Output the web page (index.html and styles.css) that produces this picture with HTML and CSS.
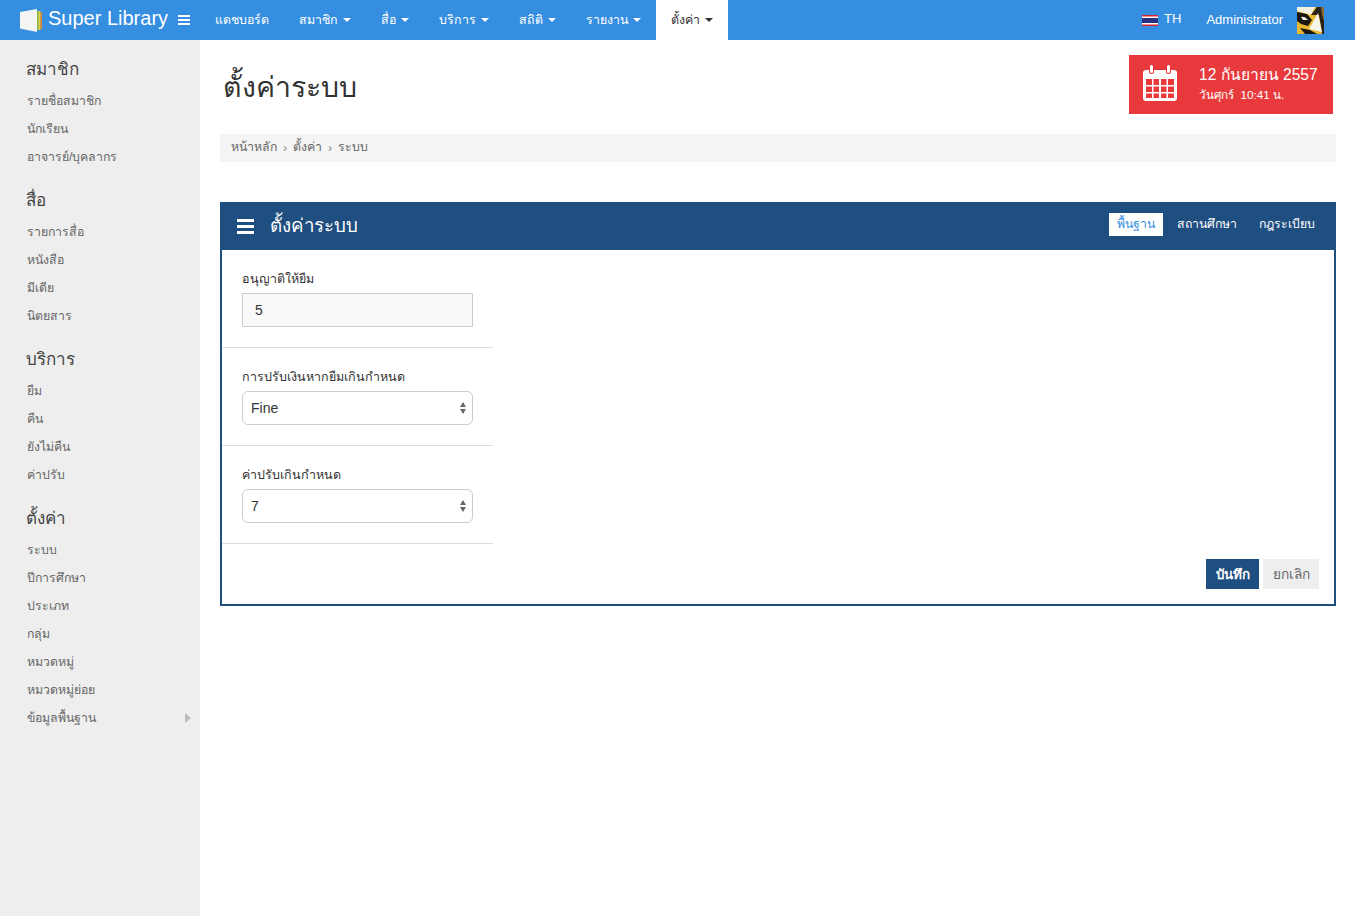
FILE: index.html
```html
<!doctype html>
<html lang="th">
<head>
	<meta charset="utf-8">
	<title>Super Library</title>
	<link rel="stylesheet" href="styles.css">
</head>
<body>
	<header class="navbar">
		<a class="brand" href="#">
			<svg class="brand-logo" width="22" height="23" viewBox="0 0 22 23">
				<rect x="17" y="2" width="1.700" height="19" fill="#8fbf45"/>
				<rect x="18.700" y="2" width="1.700" height="19" fill="#ecd03c"/>
				<rect x="20.400" y="3" width="1.600" height="17" fill="#e58a2c"/>
				<path d="M0 3 17 0V23L0 19.500Z" fill="#f4f4f2"/>
			</svg>
			<span class="brand-name">Super Library</span>
		</a>
		<span class="nav-toggle"><i></i><i></i><i></i></span>
		<nav class="nav-links">
			<a href="#">แดชบอร์ด</a>
			<a href="#">สมาชิก <b class="caret"></b></a>
			<a href="#">สื่อ <b class="caret"></b></a>
			<a href="#">บริการ <b class="caret"></b></a>
			<a href="#">สถิติ <b class="caret"></b></a>
			<a href="#">รายงาน <b class="caret"></b></a>
			<a href="#" class="active">ตั้งค่า <b class="caret"></b></a>
		</nav>
		<div class="nav-right">
			<a class="lang" href="#">
				<svg width="16" height="11" viewBox="0 0 16 11">
					<rect width="16" height="11" fill="#fff"/>
					<rect y="0" width="16" height="1.500" fill="#d8202c"/>
					<rect y="9.500" width="16" height="1.500" fill="#d8202c"/>
					<rect y="3" width="16" height="5" fill="#2a2f7f"/>
				</svg>
				<span>TH</span>
			</a>
			<a class="user" href="#">Administrator</a>
			<svg class="avatar" width="27" height="27" viewBox="0 0 27 27">
				<rect width="27" height="27" fill="#e8b92e"/>
				<path d="M0 0H18L14 8 0 4Z" fill="#f5f1e2"/>
				<path d="M14 8 20 0H27V27H25L22 8Z" fill="#2a2118"/>
				<path d="M24 0H27V14L25 8Z" fill="#8a6a34"/>
				<path d="M0 5 10 7 15 13 11 19 4 17 0 14Z" fill="#1b1712"/>
				<path d="M4 10Q8 9 11 13L6 13Z" fill="#f4f1e6"/>
				<path d="M21 6 12 22 25 25Z" fill="#f7f5ea"/>
				<path d="M3 21 13 23 20 27H8Z" fill="#1b1712"/>
			</svg>
		</div>
	</header>

	<div class="layout">
		<aside class="sidebar">
			<section class="side-group">
				<h4>สมาชิก</h4>
				<a href="#">รายชื่อสมาชิก</a>
				<a href="#">นักเรียน</a>
				<a href="#">อาจารย์/บุคลากร</a>
			</section>
			<section class="side-group">
				<h4>สื่อ</h4>
				<a href="#">รายการสื่อ</a>
				<a href="#">หนังสือ</a>
				<a href="#">มีเดีย</a>
				<a href="#">นิตยสาร</a>
			</section>
			<section class="side-group">
				<h4>บริการ</h4>
				<a href="#">ยืม</a>
				<a href="#">คืน</a>
				<a href="#">ยังไม่คืน</a>
				<a href="#">ค่าปรับ</a>
			</section>
			<section class="side-group">
				<h4>ตั้งค่า</h4>
				<a href="#">ระบบ</a>
				<a href="#">ปีการศึกษา</a>
				<a href="#">ประเภท</a>
				<a href="#">กลุ่ม</a>
				<a href="#">หมวดหมู่</a>
				<a href="#">หมวดหมู่ย่อย</a>
				<a href="#" class="has-sub">ข้อมูลพื้นฐาน</a>
			</section>
		</aside>

		<main class="content">
			<div class="page-head">
				<h1>ตั้งค่าระบบ</h1>
				<div class="date-box">
					<svg class="date-icon" width="34" height="36" viewBox="0 0 34 36">
						<path fill="#fff" fill-rule="evenodd" d="M3 5H6V7a2 2 0 0 0 2 2h1a2 2 0 0 0 2-2V5H23V7a2 2 0 0 0 2 2h1a2 2 0 0 0 2-2V5H31a3 3 0 0 1 3 3V33a3 3 0 0 1-3 3H3a3 3 0 0 1-3-3V8a3 3 0 0 1 3-3ZM3 14V20H9V14ZM10.500 14V20H16V14ZM18 14V20H23.500V14ZM25 14V20H31V14ZM3 21.500V27H9V21.500ZM10.500 21.500V27H16V21.500ZM18 21.500V27H23.500V21.500ZM25 21.500V27H31V21.500ZM3 28.500V33H9V28.500ZM10.500 28.500V33H16V28.500ZM18 28.500V33H23.500V28.500ZM25 28.500V33H31V28.500Z"/>
						<rect x="7" y="0" width="3" height="8" rx="1.500" fill="#fff"/>
						<rect x="24" y="0" width="3" height="8" rx="1.500" fill="#fff"/>
					</svg>
					<div class="date-text">
						<div class="date-main">12 กันยายน 2557</div>
						<div class="date-sub">วันศุกร์ &nbsp;10:41 น.</div>
					</div>
				</div>
			</div>

			<div class="breadcrumb">
				<a href="#">หน้าหลัก</a><span>›</span><a href="#">ตั้งค่า</a><span>›</span><a href="#">ระบบ</a>
			</div>

			<div class="panel">
				<div class="panel-head">
					<span class="panel-icon"><i></i><i></i><i></i></span>
					<h3>ตั้งค่าระบบ</h3>
					<div class="panel-tabs">
						<a href="#" class="active">พื้นฐาน</a>
						<a href="#">สถานศึกษา</a>
						<a href="#">กฎระเบียบ</a>
					</div>
				</div>
				<form class="panel-body">
					<div class="form-row">
						<label>อนุญาติให้ยืม</label>
						<input class="field field-input" type="text" value="5">
					</div>
					<div class="form-row">
						<label>การปรับเงินหากยืมเกินกำหนด</label>
						<div class="select-wrap">
							<select class="field field-select"><option>Fine</option></select>
						</div>
					</div>
					<div class="form-row">
						<label>ค่าปรับเกินกำหนด</label>
						<div class="select-wrap">
							<select class="field field-select"><option>7</option></select>
						</div>
					</div>
					<div class="form-actions">
						<button type="button" class="btn btn-save">บันทึก</button>
						<button type="button" class="btn btn-cancel">ยกเลิก</button>
					</div>
				</form>
			</div>
		</main>
	</div>
</body>
</html>
```

FILE: styles.css
```css
* { box-sizing: border-box; }
html, body { height: 100%; }
body { margin: 0; font-family: "Liberation Sans", "Noto Sans", sans-serif; font-size: 12.3px; color: #333; background: #fff; }
a { color: inherit; text-decoration: none; }

/* top bar */
.navbar { display: flex; align-items: stretch; height: 40px; background: #368ee0; color: #fff; }
.brand { display: flex; align-items: center; padding-left: 20px; }
.brand-logo { margin-right: 6px; }
.brand-name { padding-bottom: 4px; font-size: 20px; }
.nav-toggle { display: flex; flex-direction: column; justify-content: center; gap: 2px; width: 12px; margin: 0 10px; }
.nav-toggle i { display: block; height: 2px; background: #fff; }
.nav-links { display: flex; font-size: 12.4px; }
.nav-links a { display: flex; align-items: center; gap: 5px; padding: 0 15px 2px; }
.nav-links a.active { background: #fff; color: #333; }
.caret { width: 0; height: 0; margin-top: 2px; border-left: 4px solid transparent; border-right: 4px solid transparent; border-top: 4px solid currentColor; }
.nav-right { display: flex; align-items: center; margin-left: auto; padding-right: 31px; font-size: 13px; }
.lang { display: flex; align-items: center; gap: 6px; margin-right: 25px; }
.lang span { margin-bottom: 4px; }
.user { margin-bottom: 2px; }
.avatar { margin-left: 14px; }

/* sidebar */
.layout { display: flex; min-height: 876px; }
.sidebar { flex: 0 0 200px; padding: 12px 0 0 27px; background: #eee; color: #666; }
.side-group { margin-bottom: 13px; }
.side-group h4 { margin: 0 0 0 -1px; padding-top: 2px; font-size: 17px; font-weight: 400; line-height: 32px; color: #444; }
.side-group a { display: block; padding-top: 2px; line-height: 26px; }
.has-sub { position: relative; }
.has-sub::after { content: ""; position: absolute; right: 9px; top: 10px; border-left: 6px solid #bbb; border-top: 5px solid transparent; border-bottom: 5px solid transparent; }

/* page */
.content { flex: 1; padding: 15px 19px 0 20px; }
.page-head { display: flex; justify-content: space-between; align-items: center; height: 59px; }
.page-head h1 { margin: 4px 0 0 3px; font-size: 28.5px; font-weight: 400; color: #333; }
.date-box { display: flex; align-items: center; gap: 22px; width: 204px; height: 59px; margin-right: 3px; padding-left: 14px; background: #e83a3c; color: #fff; }
.date-icon { margin-top: -4px; }
.date-text { margin-top: 1px; }
.date-main { font-size: 15.6px; line-height: 20px; }
.date-sub { font-size: 11.7px; line-height: 20px; }

.breadcrumb { display: flex; align-items: center; gap: 6px; height: 28px; margin-top: 20px; padding: 0 11px 4px; background: #f4f4f4; color: #666; }
.breadcrumb span { padding-top: 4px; color: #888; }

/* panel */
.panel { margin-top: 40px; border: 2px solid #1f4e80; border-top: 0; }
.panel-head { display: flex; align-items: center; height: 48px; margin: 0 -2px; padding: 0 13px 0 17px; background: #1f4e80; color: #fff; }
.panel-icon { display: flex; flex-direction: column; gap: 3px; width: 17px; margin-right: 16px; }
.panel-icon i { display: block; height: 3px; background: #fff; }
.panel-head h3 { margin: 0 0 2px; font-size: 18.7px; font-weight: 400; }
.panel-tabs { display: flex; gap: 6px; margin-left: auto; margin-bottom: 4px; }
.panel-tabs a { padding: 0 8px; line-height: 23px; }
.panel-tabs a.active { background: #fff; color: #368ee0; }
.form-row { width: 271px; padding: 19px 20px 20px; border-bottom: 1px solid #ddd; }
.form-row label { display: block; margin-bottom: 4px; font-size: 12.5px; line-height: 20px; color: #333; }
.field { display: block; width: 231px; height: 34px; font-family: inherit; font-size: 14px; color: #333; }
.field-input { padding: 0 12px; border: 1px solid #ccc; background: #f9f9f9; }
.field-select { padding: 0 8px; border: 1px solid #ccc; border-radius: 6px; background: #fff; appearance: none; -webkit-appearance: none; }
.select-wrap { position: relative; width: 231px; }
.select-wrap::before, .select-wrap::after { content: ""; position: absolute; right: 7.500px; border-left: 3.500px solid transparent; border-right: 3.500px solid transparent; }
.select-wrap::before { top: 11px; border-bottom: 5px solid #666; }
.select-wrap::after { top: 18px; border-top: 5px solid #666; }
.form-actions { display: flex; justify-content: flex-end; gap: 4px; padding: 15px 15px 15px 0; }
.btn { height: 30px; padding: 0; border: 0; font-family: inherit; }
.btn-save { width: 53px; background: #1f4e80; color: #fff; font-size: 13.3px; font-weight: 700; }
.btn-cancel { width: 56px; background: #eee; color: #666; font-size: 13.7px; }
```
